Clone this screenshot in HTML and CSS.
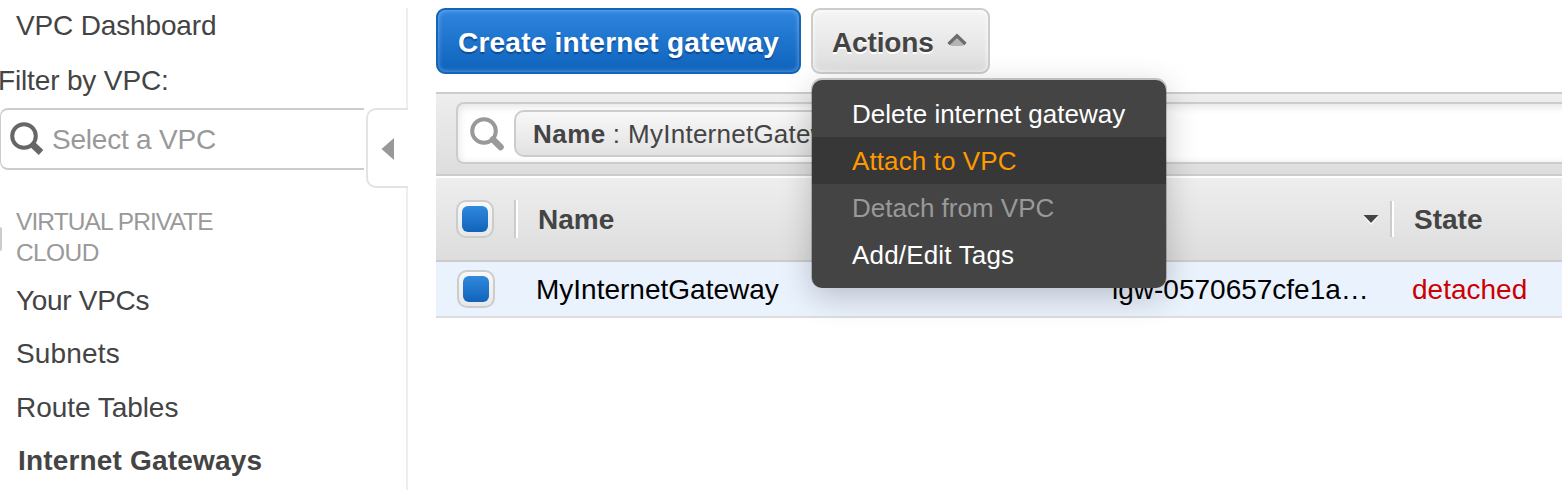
FILE: index.html
```html
<!DOCTYPE html>
<html lang="en">
<head>
<meta charset="utf-8">
<title>VPC Internet Gateways</title>
<link rel="stylesheet" href="styles.css">
</head>
<body>
<div class="app">
  <nav class="sidebar">
    <a class="nav-item dashboard"><span class="t-dash">VPC Dashboard</span></a>
    <label class="filter-label">Filter by VPC:</label>
    <div class="filter-row">
      <div class="filter-box">
        <svg class="search-icon" width="36" height="36" viewBox="0 0 36 36"><circle cx="15" cy="15" r="11.8" fill="none" stroke="#666" stroke-width="4"/><path d="M22.500 22.500L32 31.500" stroke="#666" stroke-width="6.600"/></svg>
        <span class="t-select">Select a VPC</span>
      </div>
      <div class="collapse"><svg width="14" height="24" viewBox="0 0 14 24"><path d="M13 1V23L0.500 12Z" fill="#999"/></svg></div>
    </div>
    <div class="section"><span class="t-sect">VIRTUAL PRIVATE</span><br><span class="t-cloud">CLOUD</span></div>
    <a class="nav-item"><span class="t-your">Your VPCs</span></a>
    <a class="nav-item"><span class="t-sub">Subnets</span></a>
    <a class="nav-item"><span class="t-route">Route Tables</span></a>
    <a class="nav-item active"><span class="t-igw">Internet Gateways</span></a>
    <span class="edge-mark"></span>
  </nav>
  <main class="main">
    <div class="toolbar">
      <button class="btn primary">Create internet gateway</button>
      <div class="dropdown">
        <button class="btn actions">Actions<svg width="22" height="16" viewBox="0 0 22 16"><path d="M11 4L19 12L16.500 14H5.500L3 12Z" fill="#b4b4b4"/><path d="M2.500 12L11 3.800L19.500 12" fill="none" stroke="#6c6c6c" stroke-width="3.200"/></svg></button>
        <ul class="menu">
          <li><span class="t-del">Delete internet gateway</span></li>
          <li class="hover"><span class="t-att">Attach to VPC</span></li>
          <li class="disabled"><span class="t-det">Detach from VPC</span></li>
          <li><span class="t-tags">Add/Edit Tags</span></li>
        </ul>
      </div>
    </div>
    <div class="searchbar">
      <div class="search-field">
        <svg class="search-icon" width="36" height="36" viewBox="0 0 36 36"><circle cx="15" cy="15" r="11.800" fill="none" stroke="#999" stroke-width="4"/><path d="M24 23.500L31.500 31" stroke="#999" stroke-width="6.600" stroke-linecap="round"/></svg>
        <span class="token"><b>Name</b><span class="sep">:</span><span class="value">MyInternetGateway</span></span>
      </div>
    </div>
    <div class="grid head">
      <span class="check"><i></i></span>
      <span class="cell col-name">Name</span>
      <span class="cell col-id"><svg width="16" height="11" viewBox="0 0 16 11"><path d="M0.500 2.500H15.500L8 11Z" fill="#fff"/><path d="M0.500 1H15.500L8 9Z" fill="#444"/></svg></span>
      <span class="cell col-state">State</span>
    </div>
    <div class="grid row">
      <span class="check"><i></i></span>
      <span class="cell col-name">MyInternetGateway</span>
      <span class="cell col-id">igw-0570657cfe1a…</span>
      <span class="cell col-state">detached</span>
    </div>
  </main>
</div>
</body>
</html>
```
FILE: styles.css
```css
* { box-sizing: border-box; }
body {
  margin: 0;
  background: #fff;
  color: #444;
  font: 28px/54px "Liberation Sans", Arial, sans-serif;
  overflow: hidden;
}
.app { display: flex; height: 490px; padding-top: 8px; overflow: hidden; white-space: nowrap; }

.sidebar {
  position: relative;
  display: flex;
  flex-direction: column;
  flex: none;
  width: 408px;
  height: 482px;
  border-right: 2px solid #eee;
}
.nav-item { flex: none; height: 53.3px; line-height: 53.3px; padding-left: 16px; }
.nav-item.dashboard { height: 34px; line-height: 36px; }
.nav-item.active { padding-left: 18px; font-weight: bold; }
.filter-label { height: 66px; line-height: 78px; margin-left: -2px; letter-spacing: -0.15px; }
.filter-row { display: flex; flex: none; height: 80px; width: 408px; justify-content: space-between; }
.filter-box {
  display: flex;
  align-items: center;
  width: 364px;
  height: 62px;
  padding-left: 8px;
  border: 2px solid #ccc;
  border-left-width: 1px;
  border-right: 0;
  border-radius: 8px 0 0 8px;
  color: #999;
}
.filter-box .t-select { margin: 2px 0 0 7px; }
.search-icon { flex: none; }
.collapse {
  display: flex;
  align-items: center;
  width: 42px;
  height: 80px;
  padding: 2px 0 0 13px;
  background: #fff;
  border: 2px solid #e3e3e3;
  border-right: 0;
  border-radius: 10px 0 0 10px;
}
.section { flex: none; height: 86px; padding: 18px 0 0 16px; font-size: 24.5px; line-height: 31px; color: #999; }
.edge-mark { position: absolute; left: 0; top: 219px; width: 2px; height: 24px; background: #ccc; border-radius: 0 2px 2px 0; }
.t-dash { letter-spacing: -0.15px; }
.t-select { letter-spacing: -0.22px; }
.t-sect { letter-spacing: -0.9px; }
.t-cloud { letter-spacing: -0.6px; }
.t-your { letter-spacing: -0.3px; }
.t-sub { letter-spacing: 0.15px; }
.t-route { letter-spacing: -0.05px; }
.t-igw { letter-spacing: 0.18px; }

.main { flex: 1; min-width: 0; margin-left: 28px; }
.toolbar { display: flex; gap: 10px; height: 84px; }
.btn {
  display: flex;
  align-items: center;
  height: 66px;
  padding: 4px 0 0 20px;
  border: 2px solid #ccc;
  border-radius: 9px;
  font: bold 28px/60px "Liberation Sans", Arial, sans-serif;
  white-space: nowrap;
}
.primary {
  width: 365px;
  color: #fff;
  letter-spacing: 0.22px;
  border-color: #1166bb;
  background: linear-gradient(#2f86df, #1166bf 90%);
  box-shadow: inset 0 0 5px rgba(255,255,255,.4);
  text-shadow: 0 2px 1px #104b95;
}
.actions {
  width: 179px;
  padding-left: 19px;
  color: #444;
  letter-spacing: -0.15px;
  background: linear-gradient(#f5f5f5, #ddd);
  box-shadow: inset 0 0 5px #fff;
  text-shadow: 0 2px 0 #fff;
}
.actions svg { margin: -6px 0 0 12px; }
.dropdown { position: relative; }
.menu {
  position: absolute;
  z-index: 5;
  left: 1px;
  top: 72px;
  width: 354px;
  height: 208px;
  margin: 0;
  padding: 10px 0;
  list-style: none;
  font-size: 26px;
  line-height: 49px;
  color: #fff;
  background: #444;
  border-radius: 10px;
  box-shadow: 0 -1px 0 1px rgba(0,0,0,.2), 0 8px 32px rgba(0,0,0,.22);
}
.menu li { height: 47px; padding-left: 40px; }
.menu .hover { background: #373737; color: #f90; }
.menu .disabled { color: #999; }
.t-att { letter-spacing: 0.1px; }
.t-tags { letter-spacing: 0.18px; }

.searchbar {
  height: 84px;
  padding: 8px 0 0 20px;
  border-top: 2px solid #ccc;
  border-bottom: 2px solid #ccc;
  background: linear-gradient(#eee, #ddd);
}
.search-field {
  display: flex;
  align-items: center;
  height: 62px;
  margin-right: -20px;
  padding-left: 11px;
  border: 2px solid #ccc;
  border-right: 0;
  border-radius: 8px 0 0 8px;
  background: #fff;
  box-shadow: inset 0 2px 10px rgba(0,0,0,.12);
}
.search-field .search-icon { margin-top: 2px; }
.token {
  height: 47px;
  margin-left: 9px;
  padding: 0 16px 0 17px;
  border: 2px solid #ccc;
  border-radius: 10px;
  background: linear-gradient(#f8f8f8, #e2e2e2);
  font-size: 26px;
  line-height: 45px;
}
.token b { letter-spacing: 0.5px; }
.token .sep { margin: 0 8px 0 7px; }
.token .value { letter-spacing: 0.25px; }

.grid { display: grid; grid-template-columns: 78px 574px 302px 1fr; align-items: center; }
.head {
  height: 86px;
  border-top: 2px solid #fff;
  border-bottom: 2px solid #ccc;
  background: linear-gradient(#eee, #ddd);
  font-weight: bold;
}
.row { height: 56px; background: #eaf2fe; border-bottom: 2px solid #ddd; color: #000; }
.check {
  display: flex;
  width: 38px;
  height: 38px;
  margin-left: 20px;
  padding: 4px;
  border: 2px solid #ccc;
  border-radius: 10px;
  background: linear-gradient(#f8f8f8, #e8e8e8);
}
.check i { width: 26px; height: 26px; border-radius: 6px; background: linear-gradient(#3088df, #1163b9); }
.row .check { margin: 0 0 2px 21px; }
.row .cell { line-height: 54px; padding-top: 1px; }
.head .cell { height: 38px; line-height: 40px; }
.head .col-name { padding-left: 22px; border-left: 2px solid #ccc; box-shadow: inset 2px 0 #fff; }
.head .col-id { display: flex; align-items: center; justify-content: flex-end; padding-right: 11px; }
.head .col-state { height: 36px; line-height: 38px; padding-left: 22px; border-left: 2px solid #ccc; box-shadow: inset 2px 0 #fff; }
.row .col-name { padding-left: 22px; }
.row .col-id { padding-left: 24px; }
.row .col-state { padding-left: 22px; color: #c00; }
```
